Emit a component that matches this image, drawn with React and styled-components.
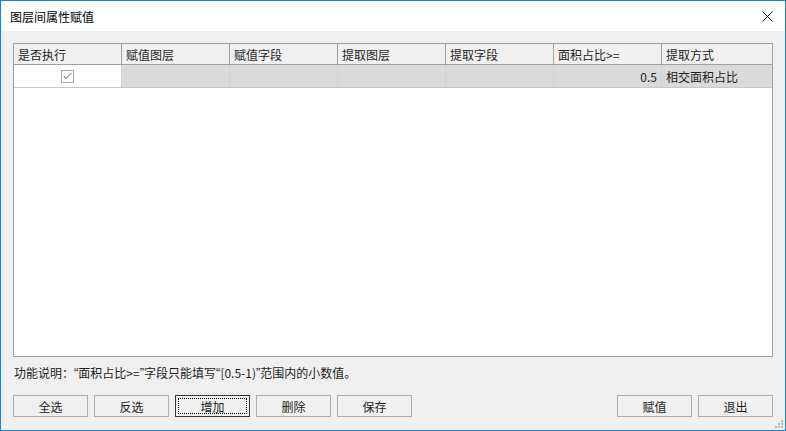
import React from "react";
import styled, { createGlobalStyle } from "styled-components";

const Global = createGlobalStyle`
  html, body { margin: 0; padding: 0; background: #ffffff; }
  * { box-sizing: border-box; }
  body { font-family: "Noto Sans CJK SC", "Microsoft YaHei", sans-serif; font-size: 12px; color: #1e1e1e; }
`;

const Frame = styled.div`
  width: 786px;
  height: 431px;
  border: 1px solid #1883d7;
  display: flex;
  flex-direction: column;
  background: #f0f0f0;
  position: relative;
`;

const TitleBar = styled.div`
  height: 30px;
  background: #ffffff;
  display: flex;
  align-items: center;
  justify-content: space-between;
  padding: 0 8px 0 9px;
  font-size: 12px;
  color: #000;
`;

const CloseBtn = styled.div`
  width: 20px;
  height: 20px;
  display: flex;
  align-items: center;
  justify-content: center;
`;

const Body = styled.div`
  flex: 1;
  display: flex;
  flex-direction: column;
  padding: 12px 12px 0 12px;
`;

const Grid = styled.div`
  height: 314px;
  background: #ffffff;
  border: 1px solid #a0a0a0;
  display: flex;
  flex-direction: column;
`;

const Row = styled.div`
  display: grid;
  grid-template-columns: repeat(6, 108px) 1fr;
  height: ${(p) => (p.$header ? 21 : 23)}px;
  border-bottom: 1px solid ${(p) => (p.$header ? "#a0a0a0" : "#c8c8c8")};
  background: ${(p) => (p.$header ? "#f0f0f0" : "#dadada")};
`;

const Cell = styled.div`
  display: flex;
  align-items: center;
  justify-content: ${(p) => p.$align || "flex-start"};
  padding: 0 4px;
  border-right: 1px solid ${(p) => (p.$header ? "#a0a0a0" : "#d2d2d2")};
  background: ${(p) => (p.$white ? "#ffffff" : "transparent")};
  color: #1e1e1e;
  white-space: nowrap;
  &:last-child { border-right: none; }
`;

const Check = styled.div`
  width: 13px;
  height: 13px;
  border: 1px solid #a6a6a6;
  background: #fff;
  display: flex;
  align-items: center;
  justify-content: center;
`;

const Note = styled.div`
  height: 30px;
  display: flex;
  align-items: center;
  padding-left: 1px;
  color: #1e1e1e;
  white-space: pre;
`;

const Quote = styled.span`
  font-family: "Liberation Sans", Arial, sans-serif;
  font-size: 13px;
`;

const Buttons = styled.div`
  margin-top: 8px;
  display: flex;
  gap: 6px;
`;

const Spacer = styled.div`
  flex: 1;
`;

const Button = styled.button`
  width: 75px;
  height: 22px;
  font-family: inherit;
  font-size: 12px;
  color: #1e1e1e;
  background: #f0f0f0;
  border: 1px solid ${(p) => (p.$focus ? "#333333" : "#adadad")};
  padding: 0;
  position: relative;
  display: flex;
  align-items: center;
  justify-content: center;
  &::after {
    content: "";
    display: ${(p) => (p.$focus ? "block" : "none")};
    position: absolute;
    inset: 2px;
    border: 1px dotted #000;
  }
`;

const Grip = styled.svg`
  position: absolute;
  right: 2px;
  bottom: 2px;
`;

const headers = ["是否执行", "赋值图层", "赋值字段", "提取图层", "提取字段", "面积占比>=", "提取方式"];

export default function App() {
  return (
    <>
      <Global />
      <Frame>
        <TitleBar>
          <span>图层间属性赋值</span>
          <CloseBtn>
            <svg width="11" height="11" viewBox="0 0 11 11">
              <path d="M0.5 0.5 L10.5 10.5 M10.5 0.5 L0.5 10.5" stroke="#111" strokeWidth="1" />
            </svg>
          </CloseBtn>
        </TitleBar>
        <Body>
          <Grid>
            <Row $header>
              {headers.map((h) => (
                <Cell $header key={h}>{h}</Cell>
              ))}
            </Row>
            <Row>
              <Cell $white $align="center">
                <Check>
                  <svg width="9" height="8" viewBox="0 0 9 8">
                    <path d="M0.8 4 L3.2 6.4 L8.2 1" stroke="#8a8a8a" strokeWidth="1.1" fill="none" />
                  </svg>
                </Check>
              </Cell>
              <Cell />
              <Cell />
              <Cell />
              <Cell />
              <Cell $align="flex-end">0.5</Cell>
              <Cell>相交面积占比</Cell>
            </Row>
          </Grid>
          <Note>
            功能说明：<Quote>“</Quote>面积占比&gt;=<Quote>”</Quote>字段只能填写<Quote>“</Quote>[0.5-1)<Quote>”</Quote>范围内的小数值。
          </Note>
          <Buttons>
            <Button>全选</Button>
            <Button>反选</Button>
            <Button $focus>增加</Button>
            <Button>删除</Button>
            <Button>保存</Button>
            <Spacer />
            <Button>赋值</Button>
            <Button>退出</Button>
          </Buttons>
        </Body>
        <Grip width="10" height="10" viewBox="0 0 10 10">
          {[[8, 2], [8, 5], [5, 5], [8, 8], [5, 8], [2, 8]].map(([x, y]) => (
            <rect key={`${x}-${y}`} x={x} y={y} width="2" height="2" fill="#b8b8b8" />
          ))}
        </Grip>
      </Frame>
    </>
  );
}
